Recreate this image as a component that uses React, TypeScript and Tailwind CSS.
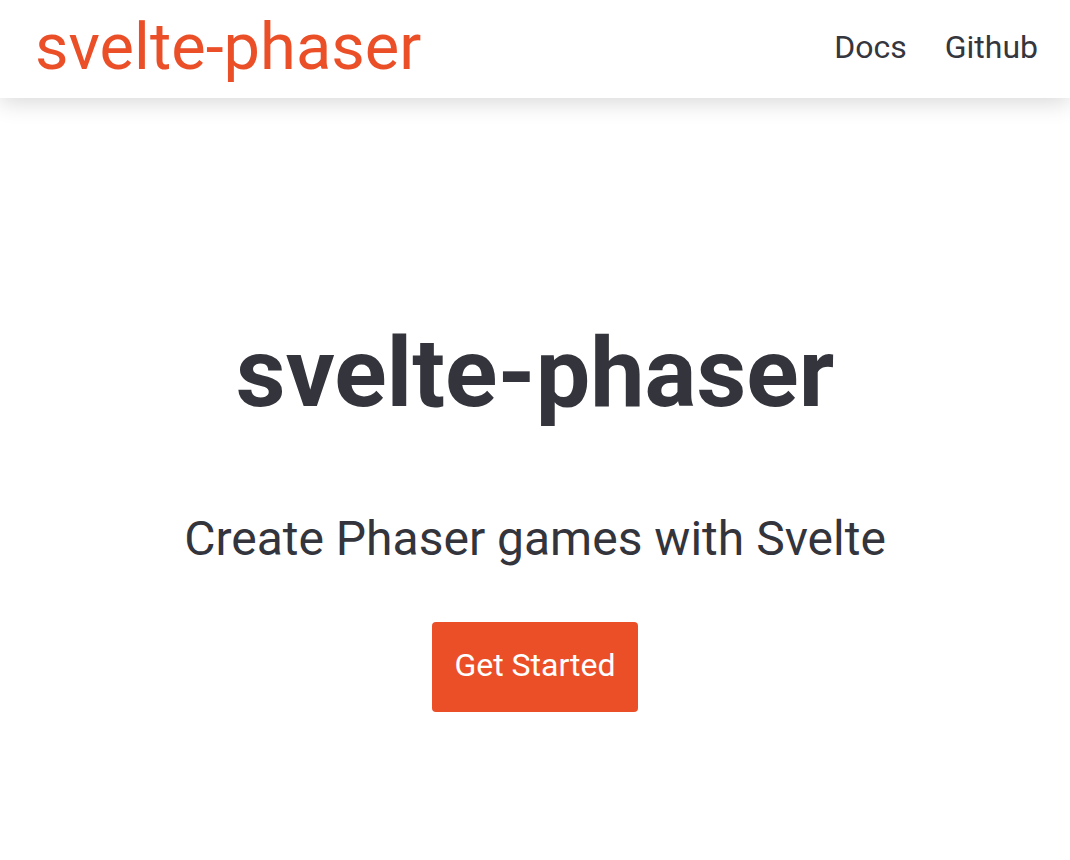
import React from "react";

export default function App() {
  return (
    <div className="min-h-[860px] bg-white text-[#33343c]" style={{ fontFamily: "Roboto, 'Noto Sans', sans-serif" }}>
      <header className="relative z-10 flex h-[98px] items-start justify-between bg-white pl-[35px] pr-8 shadow-[0_4px_22px_rgba(0,0,0,0.16)]">
        <a className="mt-[15px] text-[65px] leading-none text-[#eb4f28]">svelte-phaser</a>
        <nav className="mt-[31px] flex gap-[38px] text-[32px] leading-none text-[#35363e]">
          <a>Docs</a>
          <a>Github</a>
        </nav>
      </header>
      <main className="flex flex-col items-center pt-[227px]">
        <h1 className="text-[97px] font-bold leading-none">svelte-phaser</h1>
        <p className="mt-[93px] text-[48px] leading-none">Create Phaser games with Svelte</p>
        <a className="mt-[59px] flex h-[90px] items-start rounded-[4px] bg-[#eb4f28] px-[22px] pt-[27px] text-[32px] leading-none text-white">
          Get Started
        </a>
      </main>
    </div>
  );
}
